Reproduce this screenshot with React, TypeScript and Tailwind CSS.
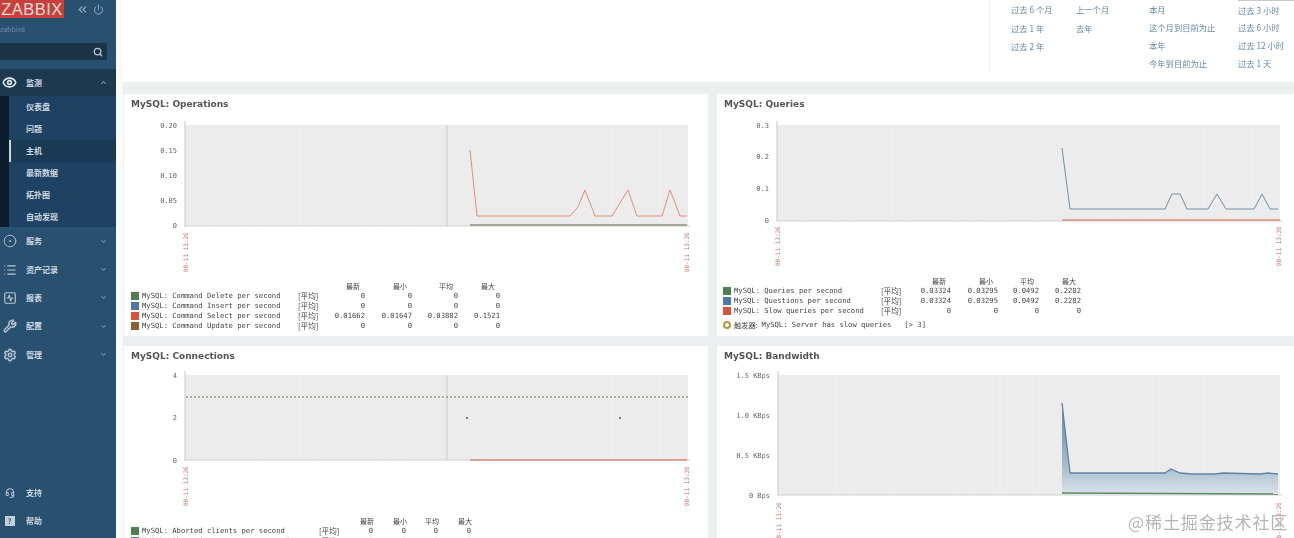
import React from "react";
import { Eye, ChevronUp, ChevronDown, Search, Wrench, ChevronsLeft, Power, CircleDot, List, SquareActivity, Settings, Headset } from "lucide-react";

const mono = "font-['DejaVu_Sans_Mono','Liberation_Mono',monospace]";
const cjk = "font-['Noto_Sans_CJK_SC','Noto_Sans',sans-serif]";

type NavItem = { label: string; icon: React.ReactNode };

const mainNav: NavItem[] = [
  { label: "服务", icon: <CircleDot size={14} strokeWidth={1.5} /> },
  { label: "资产记录", icon: <List size={14} strokeWidth={2} /> },
  { label: "报表", icon: <SquareActivity size={14} strokeWidth={2} /> },
  { label: "配置", icon: <Wrench size={14} strokeWidth={2.5} /> },
  { label: "管理", icon: <Settings size={14} strokeWidth={2.5} /> },
];
const subNav = ["仪表盘", "问题", "主机", "最新数据", "拓扑图", "自动发现"];

function Sidebar() {
  return (
    <aside className={`flex h-full w-[116px] shrink-0 flex-col bg-[#2a5070] text-[#ccd8e2] ${cjk}`}>
      <div className="flex h-[18px] items-center">
        <div className="flex h-[18px] w-[64px] items-center justify-center bg-[#c9403a] font-['Liberation_Sans',sans-serif] text-[16.5px] tracking-[0.5px] text-[#f3dcdc]">
          ZABBIX
        </div>
        <ChevronsLeft size={13} className="ml-[12px] text-[#9db2c5]" />
        <Power size={11} className="ml-[4px] text-[#9db2c5]" />
      </div>
      <div className="mt-[4px] h-[14px] text-[7px] leading-[14px] text-[#6d8ca8]">zabbix6</div>
      <div className="mt-[7px] flex h-[17px] w-[107px] items-center justify-end rounded-r-[2px] bg-[#1b3347] pr-[4px]">
        <Search size={10} strokeWidth={3} className="text-[#b9c6d2]" />
      </div>
      <div className="mt-[9px] flex h-[27px] items-center bg-[#1c3950] pl-[2px] pr-[9px] text-[8px] font-bold">
        <Eye size={15} strokeWidth={2.5} className="w-[15px] text-[#e4ebf0]" />
        <span className="ml-[9px] flex-1">监测</span>
        <ChevronUp size={7} strokeWidth={3} />
      </div>
      <div className="flex h-[131px] border-l-[9px] border-[#0b1c2a] bg-[#1f4262]">
        <ul className="w-full">
          {subNav.map((s) => (
            <li
              key={s}
              className={
                s === "主机"
                  ? "flex h-[22px] items-center border-l-2 border-[#c7d3de] bg-[#1b3a56] pl-[15px] text-[8px] font-bold"
                  : "flex h-[22px] items-center border-l-2 border-transparent pl-[15px] text-[8px] font-bold"
              }
            >
              {s}
            </li>
          ))}
        </ul>
      </div>
      {mainNav.map((n) => (
        <div key={n.label} className="flex h-[28.4px] items-center pl-[2px] pr-[9px] text-[8px] font-bold">
          <span className="flex w-[15px] justify-center text-[#b5c5d3]">{n.icon}</span>
          <span className="ml-[9px] flex-1">{n.label}</span>
          <ChevronDown size={7} strokeWidth={3} className="text-[#a5b7c6]" />
        </div>
      ))}
      <div className="mt-auto mb-[3px] text-[8px] font-bold">
        <div className="flex h-[28px] items-center pl-[2px]">
          <span className="flex w-[15px] justify-center text-[#b5c5d3]">
            <Headset size={10} strokeWidth={2.5} />
          </span>
          <span className="ml-[9px]">支持</span>
        </div>
        <div className="flex h-[28px] items-center pl-[2px]">
          <span className="flex w-[15px] justify-center">
            <span className="flex h-[10px] w-[10px] items-center justify-center bg-[#c3d0db] text-[7px] text-[#2a5070]">?</span>
          </span>
          <span className="ml-[9px]">帮助</span>
        </div>
      </div>
    </aside>
  );
}

function TopLinks() {
  const columns: { cls: string; items: string[] }[] = [
    { cls: "w-[65px]", items: ["过去 6 个月", "过去 1 年", "过去 2 年"] },
    { cls: "w-[73px]", items: ["上一个月", "去年"] },
    { cls: "w-[89px]", items: ["本月", "这个月到目前为止", "本年", "今年到目前为止"] },
    { cls: "w-[56px] border-t border-t-[#c9c9c9]", items: ["过去 3 小时", "过去 6 小时", "过去 12 小时", "过去 1 天"] },
  ];
  return (
    <section className="flex h-[82px] shrink-0 justify-end bg-white">
      <div className={`flex h-[72px] w-[305px] border-l border-[#eef1f3] pl-[21px] text-[8.3px] text-[#6488a8] ${cjk}`}>
        {columns.map((c) => (
          <ul key={c.items[0]} className={`${c.cls} flex flex-col`}>
            {c.items.map((t) => (
              <li key={t} className="flex h-[18.6px] items-center whitespace-nowrap">
                {t}
              </li>
            ))}
          </ul>
        ))}
      </div>
    </section>
  );
}

type Series = { color: string; width?: number; points: string };
type ChartProps = {
  x: number;
  top: number;
  w: number;
  h: number;
  plot: [number, number, number, number];
  ticks: [string, number][];
  lines: Series[];
  dateY: number;
  children?: React.ReactNode;
};

function Chart({ x, top, w, h, plot, ticks, lines, dateY, children }: ChartProps) {
  const [l, t, r, b] = plot;
  const grid = [215, 243, 262, 300, 318, 365, 382, 400, 415, 447, 490, 512, 535, 560, 590, 612, 640, 660];
  return (
    <svg viewBox={`${x} ${top} ${w} ${h}`} width={w} height={h} className="block">
      <rect x={l} y={t} width={r - l} height={b - t} fill="#ececec" />
      {grid.map((g) => (
        <line
          key={g}
          x1={l + ((g - 185) / 503) * (r - l)}
          x2={l + ((g - 185) / 503) * (r - l)}
          y1={t}
          y2={b}
          stroke={g === 447 && l < 200 ? "#cfd2d3" : "#efefef"}
          strokeWidth={g === 447 && l < 200 ? 1.2 : 1}
        />
      ))}
      <line x1={l} x2={l} y1={t - 4} y2={b + 1} stroke="#c5cacc" />
      <line x1={l} x2={r + 2} y1={b} y2={b} stroke="#cfd3d3" />
      {ticks.map(([label, y]) => (
        <text key={label} x={l - 8} y={y + 2.5} textAnchor="end" fontSize="7" fill="#666" fontFamily="DejaVu Sans Mono, monospace">
          {label}
        </text>
      ))}
      {[l, r - 2].map((dx) => (
        <text
          key={dx}
          transform={`translate(${dx + 2.5} ${dateY + 40}) rotate(-90)`}
          fontSize="6"
          fill="#d96a67"
          fontFamily="DejaVu Sans Mono, monospace"
        >
          08-11 13:26
        </text>
      ))}
      {children}
      {lines.map((s) => (
        <polyline key={s.points} points={s.points} fill="none" stroke={s.color} strokeWidth={s.width ?? 1} />
      ))}
    </svg>
  );
}

type LegendRow = { color: string; name: string; vals: string[] };

function Legend({ grid, rows, headClass }: { grid: string; rows: LegendRow[]; headClass: string }) {
  return (
    <div className={`${grid} grid items-center text-[7.2px] leading-[10px] text-[#444] ${mono}`}>
      <span />
      <span />
      <span />
      {["最新", "最小", "平均", "最大"].map((h) => (
        <span key={h} className={`${headClass} text-right text-[7px] ${cjk}`}>
          {h}
        </span>
      ))}
      {rows.map((r) => (
        <React.Fragment key={r.name}>
          <span className="h-[8px] w-[8px]" style={{ backgroundColor: r.color }} />
          <span className="whitespace-pre">{r.name}</span>
          <span className={`whitespace-nowrap text-[7.6px] ${cjk}`}>[平均]</span>
          {r.vals.map((v, i) => (
            <span key={i} className="text-right">
              {v}
            </span>
          ))}
        </React.Fragment>
      ))}
    </div>
  );
}

const GREEN = "#4f7f4f";
const BLUE = "#4f78a8";
const RED = "#d9533b";
const BROWN = "#8f5f3a";
const Z = ["0", "0", "0", "0"];

function Card({ title, children, className }: { title: string; children: React.ReactNode; className: string }) {
  return (
    <section className={`${className} overflow-hidden bg-white`}>
      <h2 className="flex h-[21px] items-center pl-[7px] font-['DejaVu_Sans',sans-serif] text-[9px] font-bold text-[#555]">
        {title}
      </h2>
      <div className="pt-[1px]">{children}</div>
    </section>
  );
}

export default function App() {
  return (
    <div className="relative h-[538px] w-[1294px] overflow-hidden bg-[#fafafa]">
      <div className="flex h-full blur-[0.7px]">
        <Sidebar />
        <main className="ml-[7px] flex h-full min-w-0 flex-1 flex-col bg-[#edf0f0]">
          <TopLinks />
          <div className="mt-[12px] grid grid-cols-[584px_577px] grid-rows-[242px_192px] gap-x-[9px] gap-y-[10px] pl-[1px]">
            <Card title="MySQL: Operations" className="h-[242px]">
              <Chart
                x={124}
                top={116}
                w={584}
                h={165}
                plot={[185, 125, 688, 226]}
                dateY={232}
                ticks={[["0.20", 125], ["0.15", 150], ["0.10", 175], ["0.05", 200], ["0", 225]]}
                lines={[
                  { color: "#8f8f7c", width: 1.6, points: "470,225 687,225" },
                  { color: "#e0917d", points: "470,150 477,216 570,216 578,207 585,190 595,216 612,216 628,190 637,216 662,216 670,190 680,216 687,216" },
                ]}
              />
              <div className="pl-[7px]">
                <Legend
                  headClass="pr-[5px]"
                  grid="grid-cols-[11px_156px_24px_43px_47px_46px_42px]"
                  rows={[
                    { color: GREEN, name: "MySQL: Command Delete per second", vals: Z },
                    { color: BLUE, name: "MySQL: Command Insert per second", vals: Z },
                    { color: RED, name: "MySQL: Command Select per second", vals: ["0.01662", "0.01647", "0.03882", "0.1521"] },
                    { color: BROWN, name: "MySQL: Command Update per second", vals: Z },
                  ]}
                />
              </div>
            </Card>
            <Card title="MySQL: Queries" className="h-[242px]">
              <Chart
                x={717}
                top={116}
                w={577}
                h={160}
                plot={[777, 125, 1280, 221]}
                dateY={226}
                ticks={[["0.3", 125], ["0.2", 156], ["0.1", 188], ["0", 220]]}
                lines={[
                  { color: "#de8f80", width: 1.6, points: "1062,220 1280,220" },
                  { color: "#6f90a3", points: "1062,148 1070,209 1165,209 1172,194 1180,194 1187,209 1208,209 1217,194 1226,209 1254,209 1262,194 1270,209 1278,209" },
                ]}
              />
              <div className="pl-[6px]">
                <Legend
                  headClass="pr-[5px]"
                  grid="grid-cols-[11px_147px_24px_46px_47px_41px_42px]"
                  rows={[
                    { color: GREEN, name: "MySQL: Queries per second", vals: ["0.03324", "0.03295", "0.0492", "0.2282"] },
                    { color: BLUE, name: "MySQL: Questions per second", vals: ["0.03324", "0.03295", "0.0492", "0.2282"] },
                    { color: RED, name: "MySQL: Slow queries per second", vals: Z },
                  ]}
                />
                <div className={`mt-[4px] flex h-[10px] items-center text-[7.2px] text-[#444] ${mono}`}>
                  <span className="mr-[3px] h-[8px] w-[8px] rounded-full border-2 border-[#b8963f]" />
                  <span className={cjk}>触发器:</span>
                  <span className="ml-[4px] whitespace-pre">MySQL: Server has slow queries   [&gt; 3]</span>
                </div>
              </div>
            </Card>
            <Card title="MySQL: Connections" className="h-[192px]">
              <Chart
                x={124}
                top={368}
                w={584}
                h={148}
                plot={[185, 375, 688, 460]}
                dateY={466}
                ticks={[["4", 375], ["2", 417], ["0", 460]]}
                lines={[{ color: "#d98a7c", width: 1.6, points: "470,460 687,460" }]}
              >
                <line x1="186" x2="688" y1="397" y2="397" stroke="#9a9980" strokeWidth="1.6" strokeDasharray="2 2" />
                <circle cx="467" cy="418" r="1" fill="#555" />
                <circle cx="620" cy="418" r="1" fill="#555" />
              </Chart>
              <div className="pl-[7px]">
                <Legend
                  headClass="-mr-[1px]"
                  grid="grid-cols-[11px_177px_24px_30px_33px_32px_33px]"
                  rows={[
                    { color: GREEN, name: "MySQL: Aborted clients per second", vals: Z },
                    { color: BLUE, name: "MySQL: Aborted connects per second", vals: Z },
                  ]}
                />
              </div>
            </Card>
            <Card title="MySQL: Bandwidth" className="h-[192px]">
              <Chart
                x={717}
                top={368}
                w={577}
                h={170}
                plot={[778, 375, 1280, 495]}
                dateY={502}
                ticks={[["1.5 KBps", 375], ["1.0 KBps", 415], ["0.5 KBps", 455], ["0 Bps", 495]]}
                lines={[
                  { color: "#5f83a3", width: 1.3, points: "1062,403 1070,473 1165,473 1171,469 1180,473 1192,474 1215,474 1223,473 1260,474 1268,473 1278,474" },
                  { color: "#5f8a5f", width: 1.6, points: "1062,493 1278,494" },
                ]}
              >
                <defs>
                  <linearGradient id="bw" x1="0" y1="0" x2="0" y2="1">
                    <stop offset="0" stopColor="#5f83a3" />
                    <stop offset="0.7" stopColor="#a9bfd0" />
                    <stop offset="1" stopColor="#dbe3e9" />
                  </linearGradient>
                </defs>
                <polygon
                  points="1062,403 1070,473 1165,473 1171,469 1180,473 1192,474 1215,474 1223,473 1260,474 1268,473 1278,474 1278,495 1062,495"
                  fill="url(#bw)"
                />
              </Chart>
            </Card>
          </div>
        </main>
      </div>
      <div className={`absolute left-[1128px] top-[510px] text-[17px] leading-[24px] tracking-[0.9px] text-[#b5b5b5] ${cjk}`}>
        @稀土掘金技术社区
      </div>
    </div>
  );
}
